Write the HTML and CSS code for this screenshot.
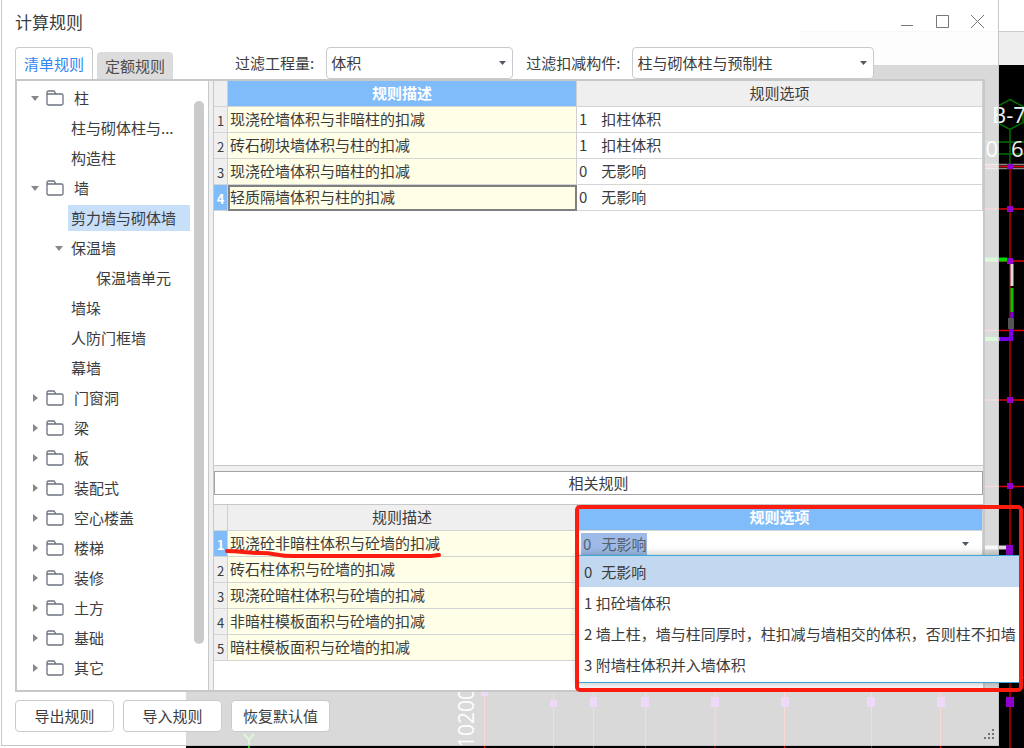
FILE: index.html
```html
<!DOCTYPE html>
<html lang="zh-CN">
<head>
<meta charset="utf-8">
<title>计算规则</title>
<link rel="stylesheet" href="styles.css">
</head>
<body>
<div class="scene">
  <svg class="drawing" viewBox="0 0 1024 748" preserveAspectRatio="xMaxYMin slice" aria-hidden="true">
    <rect width="1024" height="748" fill="#fff"/>
    <rect x="800" y="31" width="224" height="34" fill="#eeeeee"/>
    <path d="M800 31.500H1024" stroke="#ccc"/>
    <path d="M872 65H1024V748H186V85H872z" fill="#000"/>
    <g stroke="#007000" stroke-width="1.500" fill="none">
      <path d="M1010 99.500l13 7v16l-13 7-13-7v-16zM1010 130v34M985 142h39M985 154h39"/>
    </g>
    <path d="M980 164.500H1024M980 168.500H1024" stroke="#888" stroke-width="1.500"/>
    <path d="M980 166.500H1024M980 209H1024M980 261H1024M980 330.500H1024M980 400H1024M980 486.500H1024M980 677.500H1024" stroke="#e00000" stroke-width="1.500"/>
    <path d="M1010 166V748" stroke="#900000" stroke-width="2"/>
    <path d="M484.500 690V748M553.500 690V748M593.500 690V748M645.500 690V748M715 690V748M784.500 690V748M871.500 690V748M940.500 690V748" stroke="#e00000"/>
    <path d="M985 259.500h22M985 339h15" stroke="#00d800" stroke-width="4"/>
    <path d="M1000 339h11v-18" stroke="#7800e8" stroke-width="4" fill="none"/>
    <path d="M1012 264v22" stroke="#ddd" stroke-width="3"/>
    <path d="M1012 288v24" stroke="#00c800" stroke-width="3"/>
    <path d="M1012 312v6" stroke="#7800e8" stroke-width="3"/>
    <path d="M1011 318v11" stroke="#555" stroke-width="6"/>
    <path d="M985 547.500h22" stroke="#ddd" stroke-width="4"/>
    <g fill="#9000d0">
      <path d="M1007 164h6v5h-6zM1007 206h6v6h-6zM1007 258h6v6h-6zM1007 397h6v6h-6zM1007 483h6v6h-6zM1006 545h7v10h-7z"/>
      <path d="M1006 697h8v10h-8zM481 690h7v6h-7zM550 700h7v7h-7zM590 697h7v10h-7zM641 697h8v10h-8zM711 697h8v10h-8zM781 697h8v10h-8zM867 697h8v10h-8zM937 697h8v10h-8z"/>
    </g>
    <text class="mark" x="992" y="123">B-7</text>
    <text class="mark" x="973" y="157">00</text>
    <text class="mark" x="1011" y="157">6</text>
    <text class="mark mark-dim" transform="translate(474 748) rotate(-90)">10200</text>
    <path d="M244 734l5 6 5-6M249 740v8" stroke="#00c800" stroke-width="2" fill="none"/>
  </svg>

  <main class="window">
    <header class="titlebar">
      <h1 class="title">计算规则</h1>
      <button class="win-btn" type="button" aria-label="最小化"><svg width="14" height="14" viewBox="0 0 14 14"><path d="M1 10.500h12"/></svg></button>
      <button class="win-btn" type="button" aria-label="最大化"><svg width="14" height="14" viewBox="0 0 14 14"><path d="M1.500 .500h12v12h-12z"/></svg></button>
      <button class="win-btn" type="button" aria-label="关闭"><svg width="14" height="14" viewBox="0 0 14 14"><path d="M1 0l13 13M14 0L1 13"/></svg></button>
    </header>

    <div class="toolbar">
      <div class="tabs" role="tablist">
        <button class="tab tab-active" type="button" role="tab" aria-selected="true">清单规则</button>
        <button class="tab" type="button" role="tab" aria-selected="false">定额规则</button>
      </div>
      <div class="filter">
        <label for="quantity">过滤工程量:</label>
        <select id="quantity" class="select select-quantity"><option>体积</option></select>
      </div>
      <div class="filter">
        <label for="member">过滤扣减构件:</label>
        <select id="member" class="select select-member"><option>柱与砌体柱与预制柱</option></select>
      </div>
    </div>

    <div class="panel">
      <nav class="tree" aria-label="构件">
        <ul class="tree-list">
          <li class="node"><i class="arrow open"></i><svg class="folder" viewBox="0 0 18 16"><use href="#folder"/></svg><span>柱</span></li>
          <li class="node leaf"><span class="label">柱与砌体柱与...</span></li>
          <li class="node leaf"><span class="label">构造柱</span></li>
          <li class="node"><i class="arrow open"></i><svg class="folder" viewBox="0 0 18 16"><use href="#folder"/></svg><span>墙</span></li>
          <li class="node leaf"><span class="label label-selected">剪力墙与砌体墙</span></li>
          <li class="node branch"><i class="arrow open"></i><span class="label">保温墙</span></li>
          <li class="node leaf-deep"><span class="label">保温墙单元</span></li>
          <li class="node leaf"><span class="label">墙垛</span></li>
          <li class="node leaf"><span class="label">人防门框墙</span></li>
          <li class="node leaf"><span class="label">幕墙</span></li>
          <li class="node"><i class="arrow"></i><svg class="folder" viewBox="0 0 18 16"><use href="#folder"/></svg><span>门窗洞</span></li>
          <li class="node"><i class="arrow"></i><svg class="folder" viewBox="0 0 18 16"><use href="#folder"/></svg><span>梁</span></li>
          <li class="node"><i class="arrow"></i><svg class="folder" viewBox="0 0 18 16"><use href="#folder"/></svg><span>板</span></li>
          <li class="node"><i class="arrow"></i><svg class="folder" viewBox="0 0 18 16"><use href="#folder"/></svg><span>装配式</span></li>
          <li class="node"><i class="arrow"></i><svg class="folder" viewBox="0 0 18 16"><use href="#folder"/></svg><span>空心楼盖</span></li>
          <li class="node"><i class="arrow"></i><svg class="folder" viewBox="0 0 18 16"><use href="#folder"/></svg><span>楼梯</span></li>
          <li class="node"><i class="arrow"></i><svg class="folder" viewBox="0 0 18 16"><use href="#folder"/></svg><span>装修</span></li>
          <li class="node"><i class="arrow"></i><svg class="folder" viewBox="0 0 18 16"><use href="#folder"/></svg><span>土方</span></li>
          <li class="node"><i class="arrow"></i><svg class="folder" viewBox="0 0 18 16"><use href="#folder"/></svg><span>基础</span></li>
          <li class="node"><i class="arrow"></i><svg class="folder" viewBox="0 0 18 16"><use href="#folder"/></svg><span>其它</span></li>
        </ul>
        <div class="scroll"><div class="thumb"></div></div>
      </nav>

      <div class="rules">
        <section class="rules-main">
          <table class="grid">
            <colgroup><col class="col-num"><col class="col-desc"><col></colgroup>
            <thead><tr><th></th><th class="head-active">规则描述</th><th>规则选项</th></tr></thead>
            <tbody>
              <tr><th>1</th><td class="desc">现浇砼墙体积与非暗柱的扣减</td><td><span class="opt"><span>1</span><span>扣柱体积</span></span></td></tr>
              <tr><th>2</th><td class="desc">砖石砌块墙体积与柱的扣减</td><td><span class="opt"><span>1</span><span>扣柱体积</span></span></td></tr>
              <tr><th>3</th><td class="desc">现浇砼墙体积与暗柱的扣减</td><td><span class="opt"><span>0</span><span>无影响</span></span></td></tr>
              <tr><th class="num-active">4</th><td class="desc desc-current">轻质隔墙体积与柱的扣减</td><td><span class="opt"><span>0</span><span>无影响</span></span></td></tr>
            </tbody>
          </table>
        </section>
        <h2 class="related">相关规则</h2>
        <section class="rules-related">
          <table class="grid">
            <colgroup><col class="col-num"><col class="col-desc"><col></colgroup>
            <thead><tr><th></th><th>规则描述</th><th class="head-active">规则选项</th></tr></thead>
            <tbody>
              <tr>
                <th class="num-active">1</th>
                <td class="desc anchor">现浇砼非暗柱体积与砼墙的扣减
                  <svg class="underline" width="220" height="12" viewBox="0 0 220 12" aria-hidden="true"><path d="M2 3c12 0 20 2 34 2s16 3 32 3h138l8-1"/></svg>
                </td>
                <td class="anchor combo-cell">
                  <select class="combo" aria-label="规则选项"><option>0&nbsp;&nbsp; 无影响</option></select>
                  <ul class="popup" role="listbox" aria-label="规则选项">
                    <li class="item item-active" role="option" aria-selected="true"><span>0</span><span>无影响</span></li>
                    <li class="item" role="option" aria-selected="false">1 扣砼墙体积</li>
                    <li class="item" role="option" aria-selected="false">2 墙上柱，墙与柱同厚时，柱扣减与墙相交的体积，否则柱不扣墙</li>
                    <li class="item" role="option" aria-selected="false">3 附墙柱体积并入墙体积</li>
                  </ul>
                  <div class="frame"></div>
                </td>
              </tr>
              <tr><th>2</th><td class="desc">砖石柱体积与砼墙的扣减</td><td></td></tr>
              <tr><th>3</th><td class="desc">现浇砼暗柱体积与砼墙的扣减</td><td></td></tr>
              <tr><th>4</th><td class="desc">非暗柱模板面积与砼墙的扣减</td><td></td></tr>
              <tr><th>5</th><td class="desc">暗柱模板面积与砼墙的扣减</td><td></td></tr>
            </tbody>
          </table>
        </section>
      </div>
    </div>

    <footer class="footer">
      <button class="btn" type="button">导出规则</button>
      <button class="btn" type="button">导入规则</button>
      <button class="btn" type="button">恢复默认值</button>
      <svg class="grip" width="12" height="12" viewBox="0 0 12 12" aria-hidden="true"><path d="M1 9h2v2H1zM5 9h2v2H5zM9 9h2v2H9zM5 5h2v2H5zM9 5h2v2H9zM9 1h2v2H9z"/></svg>
    </footer>
  </main>
</div>
<svg class="defs" aria-hidden="true">
  <symbol id="folder" viewBox="0 0 18 16"><path d="M1 4.500V2.500Q1 1 2.500 1H8l2 3h5.500Q17 4 17 5.500v8q0 1.500-1.500 1.500h-13Q1 15 1 13.500v-9Q1 4 2 4h8"/></symbol>
</svg>
</body>
</html>
```

FILE: styles.css
```css
* { box-sizing: border-box; }

body {
  margin: 0;
  font: 15px/20px "Noto Sans CJK SC", "Noto Sans", sans-serif;
  color: #3c3c3c;
}

button, select { font: inherit; color: inherit; }

.scene {
  position: relative;
  display: flex;
  min-height: 100vh;
  padding: 0 25px 2px 1px;
  overflow: hidden;
}

.drawing {
  position: absolute;
  inset: 0;
  width: 100%;
  height: 100%;
}

.mark { font: 22px "Open Sans", sans-serif; fill: #f0f0f0; }
.mark-dim { font-size: 21px; }
.defs { position: absolute; width: 0; height: 0; }

.window {
  position: relative;
  flex: 1;
  display: flex;
  flex-direction: column;
  min-width: 0;
  background: rgba(255, 255, 255, .85);
  border: 1px solid #c4c6c8;
  border-top: 0;
}

.titlebar {
  display: flex;
  align-items: center;
  height: 44px;
  padding: 0 4px 0 13px;
}

.title { flex: 1; margin: 0; font-size: 17px; font-weight: 400; }

.win-btn {
  display: grid;
  place-items: center;
  width: 35px;
  height: 30px;
  padding: 0;
  border: 0;
  background: none;
}

.win-btn path { fill: none; stroke: #777; stroke-width: 1; }

.toolbar {
  display: flex;
  align-items: flex-end;
  padding: 3px 13px 0;
}

.tabs {
  display: flex;
  align-items: flex-end;
  gap: 4px;
  margin-right: 62px;
}

.tab {
  height: 27px;
  padding: 0 8px;
  border: 0;
  border-radius: 4px 4px 0 0;
  background: #dcdcdc;
  color: #4c4c4c;
}

.tab-active {
  height: 32px;
  border: 1px solid #c8cccf;
  border-bottom: 0;
  background: #fff;
  color: #2f88f0;
}

.filter {
  display: flex;
  align-items: center;
  gap: 12px;
  margin-right: 13px;
}

.select {
  height: 32px;
  padding: 0 20px 0 4px;
  border: 1px solid #c8cacc;
  border-radius: 4px;
  appearance: none;
  background: #fff url("data:image/svg+xml,%3Csvg xmlns='http://www.w3.org/2000/svg' width='7' height='4'%3E%3Cpath d='M0 0h7L3.500 4z' fill='%23505a66'/%3E%3C/svg%3E") no-repeat right 6px center;
}

.select-quantity { width: 187px; }
.select-member { width: 242px; }

.panel {
  flex: 1;
  display: flex;
  gap: 4px;
  margin: 0 13px;
  border: 2px solid #c5c9cc;
  background: #f0f0f0;
}

.tree {
  display: flex;
  width: 192px;
  padding: 2px 4px 6px 0;
  border-right: 1px solid #c5c9cc;
  background: #fff;
}

.tree-list { flex: 1; min-width: 0; margin: 0; padding: 0; list-style: none; }

.node {
  display: flex;
  align-items: center;
  height: 30px;
  padding-left: 12px;
  white-space: nowrap;
}

.leaf { padding-left: 51px; }
.branch { padding-left: 36px; }
.leaf-deep { padding-left: 76px; }

.label { height: 26px; padding: 3px; }
.label-selected { flex: 1; margin-right: 4px; background: #c8dffa; }

.arrow { display: grid; place-items: center; width: 12px; margin-right: 5px; }
.branch .arrow { margin-right: 3px; }

.arrow::before {
  content: "";
  border: 4px solid transparent;
  border-right-width: 0;
  border-left: 5px solid #888;
}

.arrow.open::before {
  border: 4px solid transparent;
  border-bottom-width: 0;
  border-top: 5px solid #888;
}

.folder {
  width: 18px;
  height: 16px;
  margin-right: 10px;
  fill: none;
  stroke: #6c7280;
  stroke-width: 1.300;
}

.scroll { width: 10px; padding: 18px 0 40px; }
.thumb { height: 100%; border-radius: 5px; background: #cacaca; }

.rules {
  flex: 1;
  display: flex;
  flex-direction: column;
  min-width: 0;
  border-left: 1px solid #c5c9cc;
}

.rules-main {
  flex: 1;
  margin-bottom: 5px;
  border-bottom: 1px solid #c8c8c8;
  background: #fff;
}

.related {
  margin: 0;
  border: 1px solid #a4a4a4;
  background: #fff;
  font-size: 15px;
  line-height: 22px;
  font-weight: 400;
  text-align: center;
}

.rules-related {
  height: 195px;
  padding-top: 9px;
  background: #fff;
}

.rules-related .grid { border-top: 1px solid #c8c8c8; }

.grid {
  width: 100%;
  table-layout: fixed;
  border-collapse: separate;
  border-spacing: 0;
}

.col-num { width: 14px; }
.col-desc { width: 349px; }

.grid th, .grid td {
  height: 26px;
  padding: 0 2px 1px;
  border-right: 1px solid #d0d0d0;
  border-bottom: 1px solid #d4d4d4;
  line-height: 20px;
  white-space: nowrap;
}

.grid th { background: #efefef; font-weight: 400; text-align: center; }
.grid tbody th { padding: 2px 0 0; font-size: 13px; }
.grid .desc { background: #fffee6; }
.grid .head-active { background: #80bbfa; color: #fff; font-weight: 700; }
.grid .num-active { background: #80bbfa; color: #fff; font-weight: 700; }
.grid .desc-current { outline: 2px solid #808080; outline-offset: -2px; }

.opt { display: flex; gap: 14px; }

.grid .anchor { position: relative; }

.underline { position: absolute; left: -3px; top: 17px; z-index: 2; overflow: visible; }
.underline path { fill: none; stroke: #fb1c10; stroke-width: 4; stroke-linecap: round; }

.grid .combo-cell { padding: 1px 4px; }

.combo {
  display: block;
  width: 100%;
  height: 22px;
  padding: 0 20px 0 2px;
  border: 0;
  appearance: none;
  color: #56606e;
  background:
    url("data:image/svg+xml,%3Csvg xmlns='http://www.w3.org/2000/svg' width='7' height='4'%3E%3Cpath d='M0 0h7L3.500 4z' fill='%23505a66'/%3E%3C/svg%3E") no-repeat right 9px center,
    linear-gradient(#9dbbe6, #9dbbe6) no-repeat left / 66px 100%;
}

.popup {
  position: absolute;
  left: 1px;
  right: -40px;
  top: 100%;
  z-index: 3;
  margin: -1px 0 0;
  padding: 0 0 2px;
  border: 1px solid #3ca8d4;
  border-width: 1px 0;
  background: #fff;
  box-shadow: 0 0 8px rgba(0, 0, 0, .3);
  list-style: none;
}

.item {
  display: flex;
  gap: 9px;
  height: 31px;
  align-items: center;
  padding-left: 6px;
}

.item-active { background: #c2d8f0; }

.frame {
  position: absolute;
  left: -2px;
  right: -41px;
  top: -26px;
  z-index: 4;
  height: 187px;
  border: 4px solid #fb1c10;
  border-radius: 5px;
  pointer-events: none;
}

.footer {
  display: flex;
  gap: 9px;
  padding: 8px 3px 13px 13px;
}

.btn {
  min-width: 99px;
  height: 32px;
  padding: 0 11px;
  border: 1px solid #c8cacc;
  border-radius: 4px;
  background: #fff;
}

.grip { align-self: flex-end; margin: 0 0 -8px auto; fill: #707478; }
```
